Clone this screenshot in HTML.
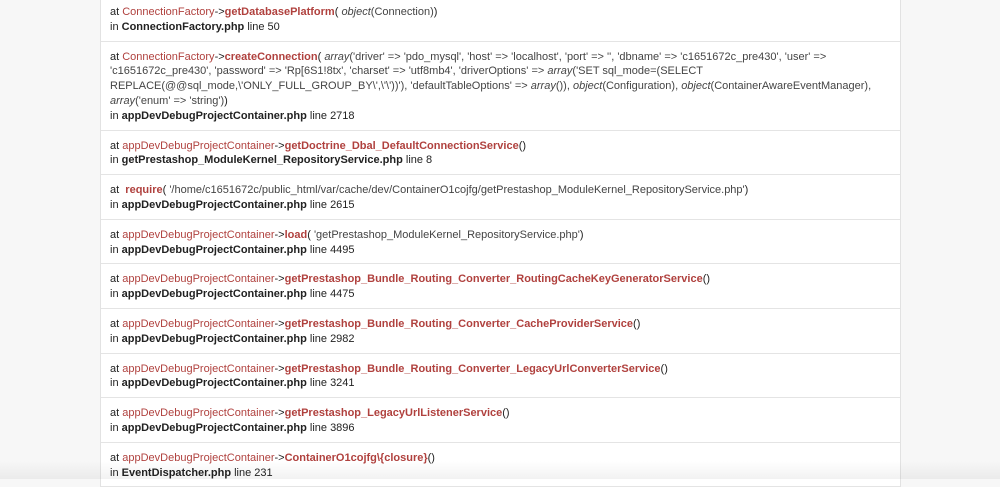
<!DOCTYPE html>
<html><head><style>
html,body{margin:0;padding:0;width:1000px;height:479px;overflow:hidden;background:#f7f7f7;}
body{font-family:"Liberation Sans",Arial,sans-serif;font-size:11px;color:#222;}
.panel{position:absolute;left:100px;top:-3px;width:799px;background:#fff;border-left:1px solid #e2e2e2;border-right:1px solid #e2e2e2;}
.row{padding:8px 10px 6px 9px;line-height:14.8px;border-bottom:1px solid #e4e4e4;}
.c{color:#b0413e;}
.f{color:#b0413e;font-weight:bold;}
.a{color:#444;}
i{font-style:italic;}
b{font-weight:bold;color:#222;}
.shade{position:absolute;left:0;right:0;bottom:0;height:18px;background:linear-gradient(to bottom,rgba(0,0,0,0),rgba(0,0,0,0.05));}
</style></head><body>
<div class="panel">
<div class="row">at <span class="c">ConnectionFactory</span>-&gt;<span class="f">getDatabasePlatform</span>( <span class="a"><i>object</i>(Connection)</span>)<br>in <b>ConnectionFactory.php</b> line 50</div>
<div class="row">at <span class="c">ConnectionFactory</span>-&gt;<span class="f">createConnection</span>( <span class="a"><i>array</i>('driver' =&gt; 'pdo_mysql', 'host' =&gt; 'localhost', 'port' =&gt; '', 'dbname' =&gt; 'c1651672c_pre430', 'user' =&gt;<br>'c1651672c_pre430', 'password' =&gt; 'Rp[6S1!8tx', 'charset' =&gt; 'utf8mb4', 'driverOptions' =&gt; <i>array</i>('SET sql_mode=(SELECT<br>REPLACE(@@sql_mode,\'ONLY_FULL_GROUP_BY\',\'\'))'), 'defaultTableOptions' =&gt; <i>array</i>()), <i>object</i>(Configuration), <i>object</i>(ContainerAwareEventManager),<br><i>array</i>('enum' =&gt; 'string')</span>)<br>in <b>appDevDebugProjectContainer.php</b> line 2718</div>
<div class="row">at <span class="c">appDevDebugProjectContainer</span>-&gt;<span class="f">getDoctrine_Dbal_DefaultConnectionService</span>()<br>in <b>getPrestashop_ModuleKernel_RepositoryService.php</b> line 8</div>
<div class="row">at &nbsp;<span class="f">require</span>( <span class="a">'/home/c1651672c/public_html/var/cache/dev/ContainerO1cojfg/getPrestashop_ModuleKernel_RepositoryService.php'</span>)<br>in <b>appDevDebugProjectContainer.php</b> line 2615</div>
<div class="row">at <span class="c">appDevDebugProjectContainer</span>-&gt;<span class="f">load</span>( <span class="a">'getPrestashop_ModuleKernel_RepositoryService.php'</span>)<br>in <b>appDevDebugProjectContainer.php</b> line 4495</div>
<div class="row">at <span class="c">appDevDebugProjectContainer</span>-&gt;<span class="f">getPrestashop_Bundle_Routing_Converter_RoutingCacheKeyGeneratorService</span>()<br>in <b>appDevDebugProjectContainer.php</b> line 4475</div>
<div class="row">at <span class="c">appDevDebugProjectContainer</span>-&gt;<span class="f">getPrestashop_Bundle_Routing_Converter_CacheProviderService</span>()<br>in <b>appDevDebugProjectContainer.php</b> line 2982</div>
<div class="row">at <span class="c">appDevDebugProjectContainer</span>-&gt;<span class="f">getPrestashop_Bundle_Routing_Converter_LegacyUrlConverterService</span>()<br>in <b>appDevDebugProjectContainer.php</b> line 3241</div>
<div class="row">at <span class="c">appDevDebugProjectContainer</span>-&gt;<span class="f">getPrestashop_LegacyUrlListenerService</span>()<br>in <b>appDevDebugProjectContainer.php</b> line 3896</div>
<div class="row">at <span class="c">appDevDebugProjectContainer</span>-&gt;<span class="f">ContainerO1cojfg\{closure}</span>()<br>in <b>EventDispatcher.php</b> line 231</div>
</div>
<div class="shade"></div>
</body></html>
